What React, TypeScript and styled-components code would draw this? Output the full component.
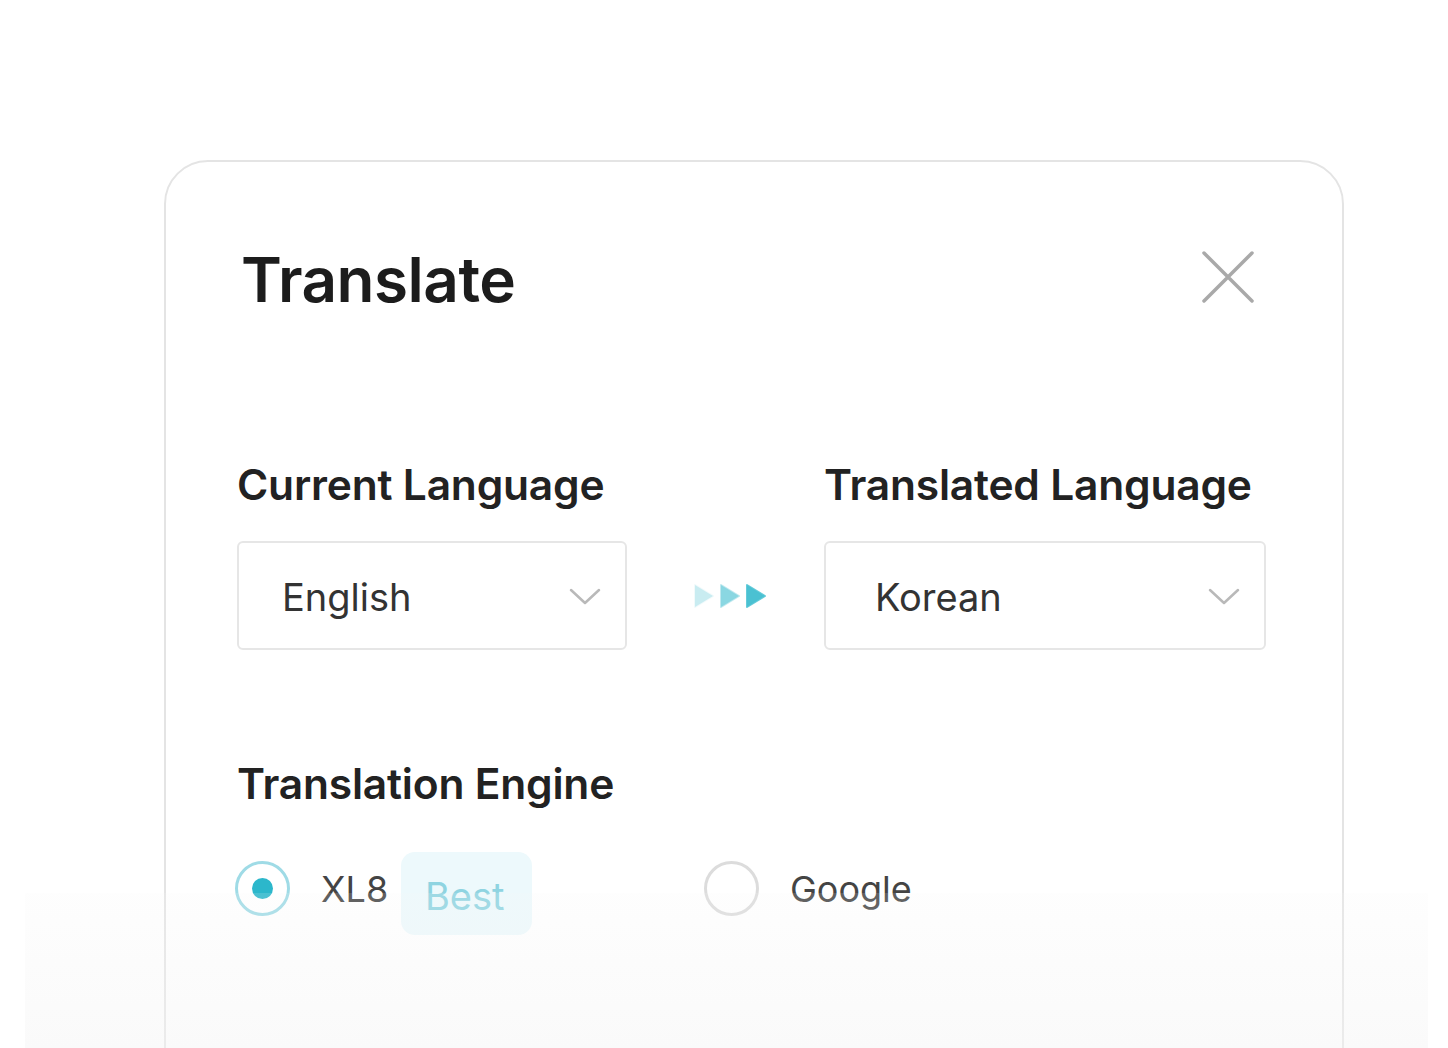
import React from 'react';
import styled, { createGlobalStyle } from 'styled-components';

const GlobalStyle = createGlobalStyle`
  html, body {
    margin: 0;
    padding: 0;
    background: #ffffff;
    font-family: Inter, "Noto Sans", "Liberation Sans", sans-serif;
    overflow: hidden;
  }
`;

const Page = styled.div`
  position: relative;
  width: 1448px;
  height: 1048px;
  overflow: hidden;
  padding: 160px 0 0 164px;
  box-sizing: border-box;
`;

const Dialog = styled.div`
  width: 1180px;
  height: 1000px;
  box-sizing: border-box;
  border: 2px solid #e4e4e4;
  border-radius: 44px;
  background: #fff;
  padding: 80px 76px 0 71px;
`;

const Header = styled.div`
  display: flex;
  justify-content: space-between;
  align-items: center;
`;

const Title = styled.h1`
  margin: 0;
  font-size: 62px;
  font-weight: 600;
  color: #1c1c1c;
  letter-spacing: -0.5px;
  padding-left: 4px;
`;

const CloseButton = styled.button`
  border: 0;
  background: none;
  padding: 0;
  margin: -6px 10px 0 0;
  width: 56px;
  height: 56px;
  display: flex;
  align-items: center;
  justify-content: center;
  cursor: pointer;
`;

const LanguageGrid = styled.div`
  display: grid;
  grid-template-columns: 390px 1fr 442px;
  grid-template-rows: auto 109px;
  row-gap: 31px;
  margin-top: 142px;
`;

const Label = styled.div`
  font-size: 42.5px;
  font-weight: 600;
  color: #222;
  letter-spacing: -0.2px;
`;

const Select = styled.div<{ $inset: number }>`
  box-sizing: border-box;
  border: 2px solid #e6e6e6;
  border-radius: 6px;
  display: flex;
  align-items: center;
  justify-content: space-between;
  padding: 2px 24px 0 ${(p) => p.$inset}px;
  font-size: 38px;
  color: #333;
`;

const Arrows = styled.div`
  display: flex;
  align-items: center;
  justify-content: center;
  padding-left: 10px;
`;

const EngineSection = styled.div`
  margin-top: 108px;
`;

const EngineRow = styled.div`
  display: flex;
  align-items: center;
  margin-top: 33px;
  margin-left: -2px;
`;

const Option = styled.label<{ $width?: number }>`
  display: flex;
  align-items: center;
  width: ${(p) => (p.$width ? `${p.$width}px` : 'auto')};
  font-size: 36px;
  color: #444;
`;

const Radio = styled.span<{ $checked?: boolean }>`
  box-sizing: border-box;
  width: 55px;
  height: 55px;
  border-radius: 50%;
  border: 3px solid ${(p) => (p.$checked ? '#9fdbe6' : '#dcdcdc')};
  display: flex;
  align-items: center;
  justify-content: center;
  margin-right: 31px;
  flex-shrink: 0;

  &::after {
    content: '';
    width: 21px;
    height: 21px;
    border-radius: 50%;
    background: #2cb7cb;
    display: ${(p) => (p.$checked ? 'block' : 'none')};
  }
`;

const Badge = styled.span`
  margin: 10px 0 0 13px;
  background: #edf9fc;
  color: #8fd4e1;
  border-radius: 14px;
  height: 83px;
  width: 131px;
  display: flex;
  align-items: center;
  justify-content: center;
  font-size: 38px;
  padding: 4px 4px 0 0;
  box-sizing: border-box;
`;

const BottomFade = styled.div`
  position: absolute;
  left: 25px;
  right: 20px;
  bottom: 0;
  height: 155px;
  background: linear-gradient(rgba(246, 246, 246, 0.15), rgba(244, 244, 244, 0.45));
  pointer-events: none;
`;

const Chevron = () => (
  <svg width="32" height="20" viewBox="0 0 32 20" fill="none">
    <path d="M2 3l14 13L30 3" stroke="#b9b9b9" strokeWidth="2.5" strokeLinecap="round" strokeLinejoin="round" />
  </svg>
);

const CloseIcon = () => (
  <svg width="54" height="54" viewBox="0 0 54 54" fill="none">
    <path d="M3 3l48 48M51 3L3 51" stroke="#a9a9a9" strokeWidth="3.5" strokeLinecap="round" />
  </svg>
);

const TripleArrow = () => (
  <svg width="76" height="28" viewBox="0 0 76 28">
    {[0, 1, 2].map((i) => (
      <path
        key={i}
        d={`M${2 + i * 26} 3 L${20 + i * 26} 14 L${2 + i * 26} 25 Z`}
        fill="#2cb7cb"
        opacity={0.25 + i * 0.3}
        stroke="#2cb7cb"
        strokeOpacity={0.25 + i * 0.3}
        strokeWidth="2"
        strokeLinejoin="round"
      />
    ))}
  </svg>
);

export default function App() {
  return (
    <>
      <GlobalStyle />
      <Page>
        <Dialog>
          <Header>
            <Title>Translate</Title>
            <CloseButton aria-label="Close">
              <CloseIcon />
            </CloseButton>
          </Header>

          <LanguageGrid>
            <Label>Current Language</Label>
            <div />
            <Label>Translated Language</Label>
            <Select $inset={43}>
              English
              <Chevron />
            </Select>
            <Arrows>
              <TripleArrow />
            </Arrows>
            <Select $inset={49}>
              Korean
              <Chevron />
            </Select>
          </LanguageGrid>

          <EngineSection>
            <Label>Translation Engine</Label>
            <EngineRow>
              <Option $width={469}>
                <Radio $checked />
                XL8
                <Badge>Best</Badge>
              </Option>
              <Option>
                <Radio />
                Google
              </Option>
            </EngineRow>
          </EngineSection>
        </Dialog>
        <BottomFade />
      </Page>
    </>
  );
}
